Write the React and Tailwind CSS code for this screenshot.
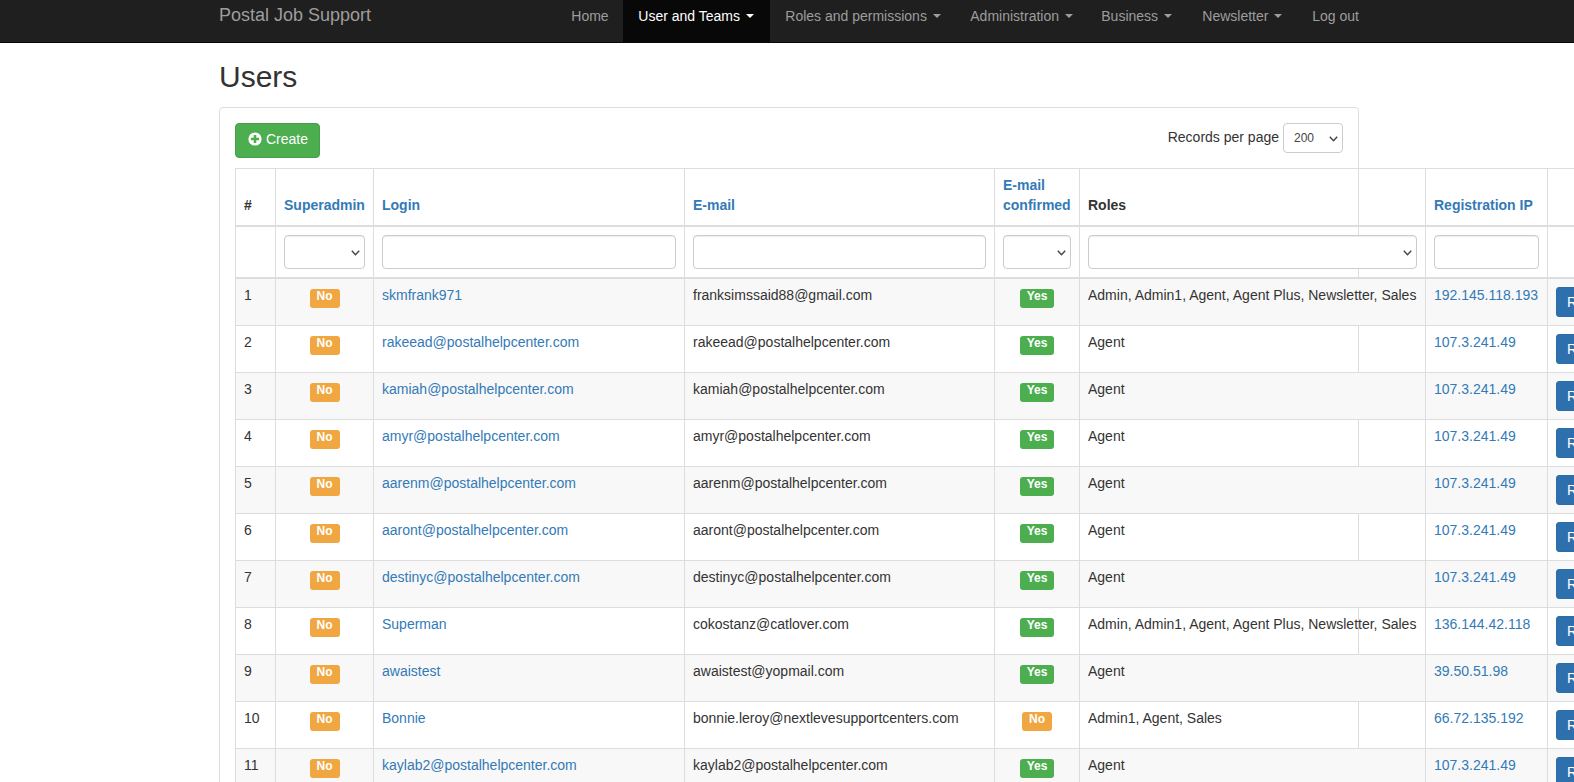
const rows = [
  ["skmfrank971", "franksimssaid88@gmail.com", "Yes", "Admin, Admin1, Agent, Agent Plus, Newsletter, Sales", "192.145.118.193"],
  ["rakeead@postalhelpcenter.com", "rakeead@postalhelpcenter.com", "Yes", "Agent", "107.3.241.49"],
  ["kamiah@postalhelpcenter.com", "kamiah@postalhelpcenter.com", "Yes", "Agent", "107.3.241.49"],
  ["amyr@postalhelpcenter.com", "amyr@postalhelpcenter.com", "Yes", "Agent", "107.3.241.49"],
  ["aarenm@postalhelpcenter.com", "aarenm@postalhelpcenter.com", "Yes", "Agent", "107.3.241.49"],
  ["aaront@postalhelpcenter.com", "aaront@postalhelpcenter.com", "Yes", "Agent", "107.3.241.49"],
  ["destinyc@postalhelpcenter.com", "destinyc@postalhelpcenter.com", "Yes", "Agent", "107.3.241.49"],
  ["Superman", "cokostanz@catlover.com", "Yes", "Admin, Admin1, Agent, Agent Plus, Newsletter, Sales", "136.144.42.118"],
  ["awaistest", "awaistest@yopmail.com", "Yes", "Agent", "39.50.51.98"],
  ["Bonnie", "bonnie.leroy@nextlevesupportcenters.com", "No", "Admin1, Agent, Sales", "66.72.135.192"],
  ["kaylab2@postalhelpcenter.com", "kaylab2@postalhelpcenter.com", "Yes", "Agent", "107.3.241.49"],
];

const nav = [
  ["Home", false, false, "w-[67px]"],
  ["User and Teams", true, true, "w-[147px]"],
  ["Roles and permissions", true, false, "w-[185px]"],
  ["Administration", true, false, "w-[131px]"],
  ["Business", true, false, "w-[101px]"],
  ["Newsletter", true, false, "w-[110px]"],
  ["Log out", false, false, ""],
];

function Badge({ value }) {
  const style = value === "Yes" ? "bg-[#4cae4f] px-[6.500px]" : "bg-[#f0a741] px-[7px]";
  return (
    <span className={`inline-block ${style} text-white font-bold text-[12px] leading-[12px] pt-[1px] pb-[6px] rounded-[3px]`}>
      {value}
    </span>
  );
}

function Select({ className = "", children, ...rest }) {
  return (
    <div className="relative">
      <select className={`block appearance-none bg-white border rounded-[4px] ${className}`} {...rest}>
        {children}
      </select>
      <svg width="9" height="6" viewBox="0 0 9 6" fill="none" className="absolute right-[5px] top-1/2 -translate-y-1/2 mt-[1px] pointer-events-none">
        <path d="M.8.8l3.700 3.900L8.200.8" stroke="#444" strokeWidth="1.400" />
      </svg>
    </div>
  );
}

const cell = "border border-[#ddd] px-2 pt-[6px] pb-2 align-top";
const head = "border border-[#ddd] border-b-2 px-2 pt-[6px] pb-[10px] align-bottom text-left font-bold leading-5";
const filter = "border border-[#ddd] border-b-2 p-2 align-top";
const control = "block w-full h-[34px] bg-white border border-[#ccc] rounded-[4px] shadow-[inset_0_1px_1px_rgba(0,0,0,0.075)]";
const filterSelect = "w-full h-[34px] border-[#ccc] shadow-[inset_0_1px_1px_rgba(0,0,0,0.075)]";

export default function App() {
  return (
    <div className="h-[782px] overflow-hidden bg-white text-[14px] leading-5 text-[#333]" style={{ fontFamily: '"Liberation Sans", Arial, sans-serif' }}>
      <nav className="h-[43px] bg-[#1f1f1f] border-b border-[#080808]">
        <div className="ml-[204px] w-[1170px] flex justify-between">
          <a className="px-[15px] pt-[5px] text-[18px] leading-5 text-[#9d9d9d]">Postal Job Support</a>
          <ul className="flex">
            {nav.map(([label, caret, active, width]) => (
              <li key={label} className={`h-[42px] px-[15px] pt-[6px] flex items-start whitespace-nowrap ${width} ${active ? "bg-[#080808] text-white" : "text-[#9d9d9d]"}`}>
                <span>{label}</span>
                {caret && <span className="ml-[6px] mt-[8px] w-0 h-0 border-x-4 border-t-4 border-x-transparent border-t-current" />}
              </li>
            ))}
          </ul>
        </div>
      </nav>

      <main className="ml-[219px] w-[1140px]">
        <h1 className="text-[30px] leading-[33px] text-[#333] mt-[17px] mb-[14px]" style={{ fontWeight: 500 }}>Users</h1>
        <section className="border border-[#ddd] rounded-[4px] p-[15px] pb-[40px]">
          <div className="flex justify-between items-start h-[45px]">
            <button className="h-[35px] w-[85px] flex items-center justify-center gap-[4px] pl-[1px] pb-[4px] bg-[#4cae4f] border border-[#46a049] rounded-[4px] text-white">
              <svg width="14" height="14" viewBox="0 0 14 14">
                <circle cx="7" cy="7" r="6.600" fill="#fff" />
                <path d="M5.700 2.900h2.600v2.800h2.800v2.600H8.300v2.800H5.700V8.300H2.900V5.700h2.800z" fill="#4cae4f" />
              </svg>
              Create
            </button>
            <div className="flex items-center gap-[4px]">
              <span className="-mt-[2px]">Records per page</span>
              <Select className="h-[30px] w-[60px] pl-[10px] border-[#ccc] text-[12px] text-[#444]" defaultValue="200">
                <option>200</option>
              </Select>
            </div>
          </div>

          <table className="table-fixed border-collapse w-[1512px] max-w-none">
            <colgroup>
              <col className="w-[40px]" />
              <col className="w-[98px]" />
              <col className="w-[311px]" />
              <col className="w-[310px]" />
              <col className="w-[85px]" />
              <col className="w-[346px]" />
              <col className="w-[122px]" />
              <col className="w-[200px]" />
            </colgroup>
            <thead>
              <tr>
                <th className={head}>#</th>
                <th className={`${head} text-[#337ab7]`}>Superadmin</th>
                <th className={`${head} text-[#337ab7]`}>Login</th>
                <th className={`${head} text-[#337ab7]`}>E-mail</th>
                <th className={`${head} text-[#337ab7]`}>E-mail confirmed</th>
                <th className={head}>Roles</th>
                <th className={`${head} text-[#337ab7]`}>Registration IP</th>
                <th className={head}></th>
              </tr>
              <tr>
                <th className={filter}></th>
                <th className={filter}><Select className={filterSelect}><option></option></Select></th>
                <th className={filter}><input className={control} /></th>
                <th className={filter}><input className={control} /></th>
                <th className={filter}><Select className={filterSelect}><option></option></Select></th>
                <th className={filter}><Select className={filterSelect}><option></option></Select></th>
                <th className={filter}><input className={control} /></th>
                <th className={filter}></th>
              </tr>
            </thead>
            <tbody>
              {rows.map(([login, email, confirmed, roles, ip], i) => (
                <tr key={login} className={`h-[46.8px] ${i % 2 === 0 ? "bg-[#f8f8f8]" : ""}`}>
                  <td className={cell}>{i + 1}</td>
                  <td className={`${cell} text-center`}><Badge value="No" /></td>
                  <td className={`${cell} text-[#337ab7]`}>{login}</td>
                  <td className={cell}>{email}</td>
                  <td className={`${cell} text-center`}><Badge value={confirmed} /></td>
                  <td className={`${cell} whitespace-nowrap`}>{roles}</td>
                  <td className={`${cell} text-[#337ab7]`}>{ip}</td>
                  <td className="border border-[#ddd] px-2 pt-[8px] pb-2 align-top">
                    <button className="h-[30px] px-[10px] bg-[#2e6fae] border border-[#2e6da4] rounded-[3px] text-white text-[14px]">Reset</button>
                  </td>
                </tr>
              ))}
            </tbody>
          </table>
        </section>
      </main>
    </div>
  );
}
